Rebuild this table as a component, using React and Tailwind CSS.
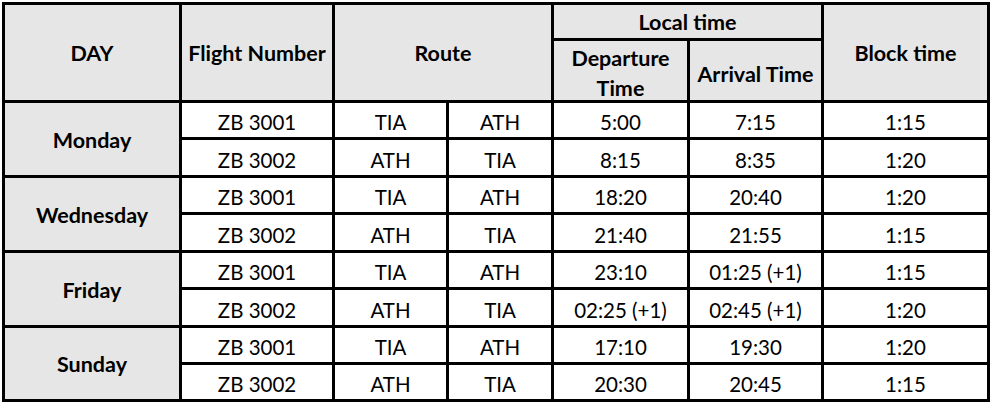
import React from "react";

const days = [
  ["Monday", [["ZB 3001", "TIA", "ATH", "5:00", "7:15", "1:15"], ["ZB 3002", "ATH", "TIA", "8:15", "8:35", "1:20"]]],
  ["Wednesday", [["ZB 3001", "TIA", "ATH", "18:20", "20:40", "1:20"], ["ZB 3002", "ATH", "TIA", "21:40", "21:55", "1:15"]]],
  ["Friday", [["ZB 3001", "TIA", "ATH", "23:10", "01:25 (+1)", "1:15"], ["ZB 3002", "ATH", "TIA", "02:25 (+1)", "02:45 (+1)", "1:20"]]],
  ["Sunday", [["ZB 3001", "TIA", "ATH", "17:10", "19:30", "1:20"], ["ZB 3002", "ATH", "TIA", "20:30", "20:45", "1:15"]]],
];

const H = "bg-[#e6e6e6] flex items-center justify-center text-center font-bold text-[21.5px]";
const C = "bg-white flex items-center justify-center text-center text-[20.5px] pt-[5px]";

export default function App() {
  return (
    <div className="w-[993px] h-[406px] bg-white pt-[2px] pl-[2px]" style={{ fontFamily: "Lato, 'Liberation Sans', sans-serif" }}>
      <div className="inline-grid bg-black p-[3px] gap-[3px] text-black leading-none grid-cols-[174px_150px_111px_102px_133px_131px_163px] grid-rows-[33px_59px_34px_35px_34px_35px_34px_35px_34px_34px]">
        <div className={`${H} row-span-2 pt-[2px]`}>DAY</div>
        <div className={`${H} row-span-2 pt-[2px]`}>Flight Number</div>
        <div className={`${H} row-span-2 col-span-2 pt-[2px]`}>Route</div>
        <div className={`${H} col-span-2 pt-[2px]`}>Local time</div>
        <div className={`${H} row-span-2 pt-[2px]`}>Block time</div>
        <div className={`${H} leading-[30px] pt-[4px]`}>Departure<br />Time</div>
        <div className={`${H} pt-[8px]`}>Arrival Time</div>
        {days.map(([day, rows]) => (
          <React.Fragment key={day}>
            <div className={`${H} row-span-2 pt-[3px]`}>{day}</div>
            {rows.map((r, i) => r.map((v, j) => (
              <div key={`${i}-${j}`} className={C}>{v}</div>
            )))}
          </React.Fragment>
        ))}
      </div>
    </div>
  );
}
